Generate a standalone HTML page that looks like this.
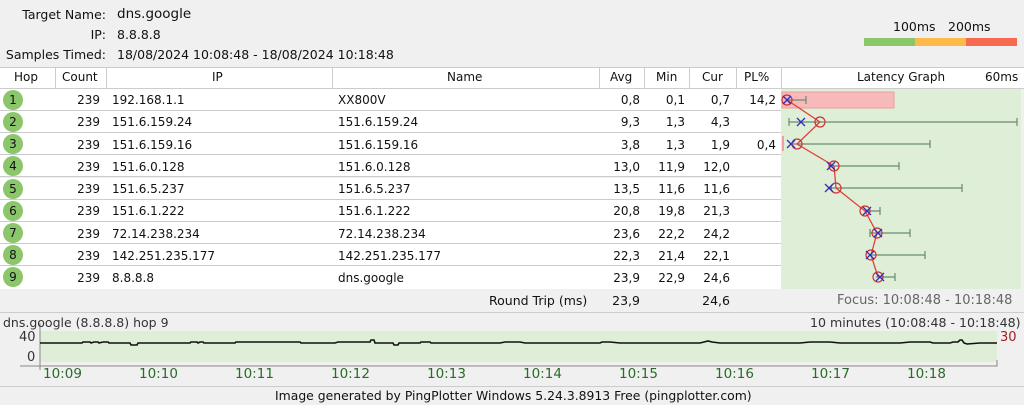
<!DOCTYPE html>
<html><head><meta charset="utf-8"><style>
*{margin:0;padding:0;box-sizing:border-box}
body{width:1024px;height:405px;background:#f0f0f0;font-family:"DejaVu Sans","Liberation Sans",sans-serif;font-size:12px;color:#111;position:relative;overflow:hidden}
.a{position:absolute;white-space:nowrap}
.r{text-align:right}
.hdr{position:absolute;left:0;top:67px;width:1024px;height:22px;background:#fff;border-top:1px solid #ccc;border-bottom:1px solid #ccc}
.row{position:absolute;left:0;width:781px;height:22px;background:#fff;border-bottom:1px solid #ccc}
.c{position:absolute;left:3px;width:20px;height:20px;border-radius:50%;background:#8cc66a;text-align:center;line-height:20px;font-size:12px}
.sep{position:absolute;top:68px;width:1px;height:20px;background:#ccc}
.t{position:absolute;top:366px;color:#2a6a2a;font-size:13.5px;white-space:nowrap}
</style></head><body>
<div class="a r" style="right:918px;top:7px;font-size:12.5px">Target Name:</div>
<div class="a" style="left:117px;top:6px;font-size:13.5px">dns.google</div>
<div class="a r" style="right:918px;top:27px;font-size:12.5px">IP:</div>
<div class="a" style="left:117px;top:27px;font-size:12.5px">8.8.8.8</div>
<div class="a r" style="right:918px;top:47px;font-size:12.5px">Samples Timed:</div>
<div class="a" style="left:117px;top:47px;font-size:12.5px">18/08/2024 10:08:48 - 18/08/2024 10:18:48</div>
<div class="a" style="left:893px;top:19px;font-size:12.5px">100ms</div>
<div class="a" style="left:948px;top:19px;font-size:12.5px">200ms</div>
<div class="a" style="left:864px;top:38px;width:51px;height:8px;background:#8cc66a"></div>
<div class="a" style="left:915px;top:38px;width:51px;height:8px;background:#fdb94a"></div>
<div class="a" style="left:966px;top:38px;width:51px;height:8px;background:#f76a50"></div>

<div class="hdr"></div>
<div class="sep" style="left:55px"></div><div class="sep" style="left:106px"></div><div class="sep" style="left:332px"></div><div class="sep" style="left:599px"></div><div class="sep" style="left:644px"></div><div class="sep" style="left:689px"></div><div class="sep" style="left:736px"></div><div class="sep" style="left:781px"></div>
<div class="a" style="left:14px;top:70px">Hop</div>
<div class="a" style="left:62px;top:70px">Count</div>
<div class="a" style="left:212px;top:70px">IP</div>
<div class="a" style="left:447px;top:70px">Name</div>
<div class="a" style="left:610px;top:70px">Avg</div>
<div class="a" style="left:656px;top:70px">Min</div>
<div class="a" style="left:702px;top:70px">Cur</div>
<div class="a" style="left:744px;top:70px">PL%</div>
<div class="a" style="left:857px;top:70px">Latency Graph</div>
<div class="a" style="left:985px;top:70px">60ms</div>

<div class="a" style="left:781px;top:89px;width:240px;height:200px;background:#dfeed6"></div>

<div class="row" style="top:89px"></div><div class="row" style="top:111px"></div><div class="row" style="top:133px"></div><div class="row" style="top:155px"></div><div class="row" style="top:178px"></div><div class="row" style="top:200px"></div><div class="row" style="top:222px"></div><div class="row" style="top:244px"></div><div class="row" style="top:266px;border-bottom:none;height:23px"></div>

<div class="c" style="top:90px">1</div><div class="c" style="top:112px">2</div><div class="c" style="top:134px">3</div><div class="c" style="top:156px">4</div><div class="c" style="top:179px">5</div><div class="c" style="top:201px">6</div><div class="c" style="top:223px">7</div><div class="c" style="top:245px">8</div><div class="c" style="top:267px">9</div>

<div class="a r" style="left:60px;width:40px;top:89px;line-height:22.3px">239<br>239<br>239<br>239<br>239<br>239<br>239<br>239<br>239</div>
<div class="a" style="left:112px;top:89px;line-height:22.3px">192.168.1.1<br>151.6.159.24<br>151.6.159.16<br>151.6.0.128<br>151.6.5.237<br>151.6.1.222<br>72.14.238.234<br>142.251.235.177<br>8.8.8.8</div>
<div class="a" style="left:338px;top:89px;line-height:22.3px">XX800V<br>151.6.159.24<br>151.6.159.16<br>151.6.0.128<br>151.6.5.237<br>151.6.1.222<br>72.14.238.234<br>142.251.235.177<br>dns.google</div>
<div class="a r" style="left:600px;width:40px;top:89px;line-height:22.3px">0,8<br>9,3<br>3,8<br>13,0<br>13,5<br>20,8<br>23,6<br>22,3<br>23,9</div>
<div class="a r" style="left:645px;width:40px;top:89px;line-height:22.3px">0,1<br>1,3<br>1,3<br>11,9<br>11,6<br>19,8<br>22,2<br>21,4<br>22,9</div>
<div class="a r" style="left:690px;width:40px;top:89px;line-height:22.3px">0,7<br>4,3<br>1,9<br>12,0<br>11,6<br>21,3<br>24,2<br>22,1<br>24,6</div>
<div class="a r" style="left:735px;width:41px;top:89px;line-height:22.3px">14,2<br><br>0,4</div>

<svg class="a" style="left:0;top:0" width="1024" height="405">
<rect x="782" y="92" width="112" height="16" fill="#f7b9b9" stroke="#e8a0a0"/>
<rect x="782" y="136" width="2" height="15" fill="#f0a0a0"/>
<g stroke="#6b8a6b" stroke-width="1.2">
<path d="M787 100H806M806 96V104"/>
<path d="M789 122H1017M789 118V126M1017 118V126"/>
<path d="M791 144H930M930 140V148"/>
<path d="M831 166H899M899 162V170"/>
<path d="M829 188H962M962 184V192"/>
<path d="M865 211H880M880 207V215"/>
<path d="M870 233H910M870 229V237M910 229V237"/>
<path d="M870 255H925M925 251V259"/>
<path d="M876 277H895M895 273V281"/>
</g>
<polyline fill="none" stroke="#e04040" stroke-width="1.3" points="787,100 820,122 797,144 834,166 836,188 865,211 877,233 871,255 878,277"/>
<g fill="none" stroke="#d03030" stroke-width="1.2">
<circle cx="787" cy="100" r="5"/><circle cx="820" cy="122" r="5"/><circle cx="797" cy="144" r="5"/><circle cx="834" cy="166" r="5"/><circle cx="836" cy="188" r="5"/><circle cx="865" cy="211" r="5"/><circle cx="877" cy="233" r="5"/><circle cx="871" cy="255" r="5"/><circle cx="878" cy="277" r="5"/>
</g>
<g stroke="#3030c0" stroke-width="1.3">
<path d="M783 96l8 8M791 96l-8 8"/><path d="M797 118l8 8M805 118l-8 8"/><path d="M787 140l8 8M795 140l-8 8"/><path d="M827 162l8 8M835 162l-8 8"/><path d="M825 184l8 8M833 184l-8 8"/><path d="M863 207l8 8M871 207l-8 8"/><path d="M874 229l8 8M882 229l-8 8"/><path d="M866 251l8 8M874 251l-8 8"/><path d="M876 273l8 8M884 273l-8 8"/>
</g>
<line x1="0" y1="312.5" x2="1024" y2="312.5" stroke="#ccc"/>
<rect x="40" y="331" width="957" height="31" fill="#dfeed6"/>
<path d="M20 366H997V360M40 323V370" stroke="#888" fill="none"/>
<polyline fill="none" stroke="#111" stroke-width="1.6" points="40,343 82,343 83,342 90,342 91,343 94,342 98,342 99,343 103,342 108,342 109,343 130,343 131,345 137,345 138,343 190,343 191,342 197,342 198,343 200,342 203,342 204,343 235,343 236,342 300,342 301,343 335,343 338,342 346,342 370,342 371,340 374,340 375,343 393,343 394,345 398,345 399,343 420,343 421,342 430,342 431,343 460,343 500,343 505,342 520,342 525,343 600,343 602,342 610,342 620,343 700,343 704,342 708,341 712,342 720,343 800,343 810,342 830,342 840,343 900,343 910,342 930,342 933,343 950,343 953,342 958,342 960,340 962,340 964,343 967,344 980,343 997,343"/>
<line x1="0" y1="386.5" x2="1024" y2="386.5" stroke="#ccc"/>
</svg>

<div class="a" style="left:489px;top:293px;font-size:12.5px">Round Trip (ms)</div>
<div class="a r" style="left:600px;width:40px;top:293px;font-size:12.5px">23,9</div>
<div class="a r" style="left:690px;width:40px;top:293px;font-size:12.5px">24,6</div>
<div class="a" style="left:837px;top:293px;color:#666;font-size:13px">Focus: 10:08:48 - 10:18:48</div>

<div class="a" style="left:3px;top:315px;color:#333;font-size:12.5px">dns.google (8.8.8.8) hop 9</div>
<div class="a" style="left:810px;top:315px;color:#333;font-size:12.6px">10 minutes (10:08:48 - 10:18:48)</div>
<div class="a" style="left:19px;top:330px;color:#333;font-size:13px">40</div>
<div class="a" style="left:27px;top:350px;color:#333;font-size:13px">0</div>
<div class="a" style="left:1000px;top:330px;color:#a02020;font-size:13px">30</div>
<div class="t" style="left:43px">10:09</div>
<div class="t" style="left:139px">10:10</div>
<div class="t" style="left:235px">10:11</div>
<div class="t" style="left:331px">10:12</div>
<div class="t" style="left:427px">10:13</div>
<div class="t" style="left:523px">10:14</div>
<div class="t" style="left:619px">10:15</div>
<div class="t" style="left:715px">10:16</div>
<div class="t" style="left:811px">10:17</div>
<div class="t" style="left:907px">10:18</div>
<div class="a" style="left:275px;top:388px;font-size:12.4px">Image generated by PingPlotter Windows 5.24.3.8913 Free (pingplotter.com)</div>
</body></html>
